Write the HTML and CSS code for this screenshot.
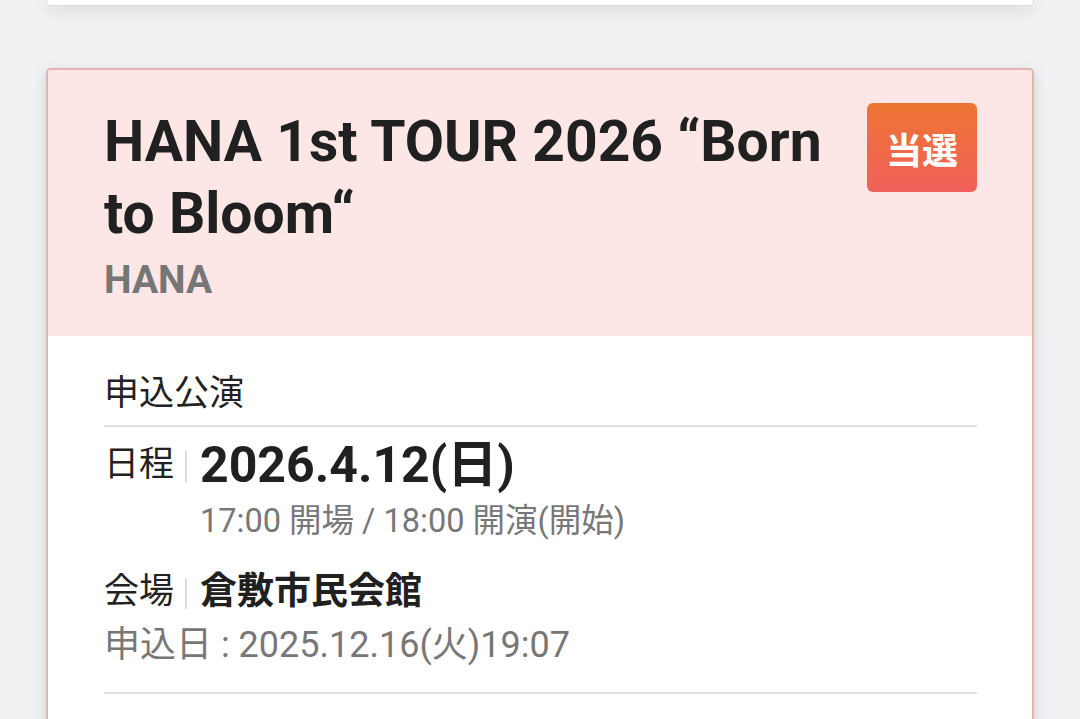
FILE: index.html
```html
<!DOCTYPE html>
<html lang="ja">
<head>
<meta charset="utf-8">
<link rel="stylesheet" href="styles.css">
</head>
<body>
<div class="page">
  <div class="card card-prev"></div>
  <div class="card card-entry">
    <div class="entry-head">
      <div class="entry-titles">
        <h1 class="entry-title">HANA 1st TOUR 2026 “Born to Bloom“</h1>
        <div class="entry-artist">HANA</div>
      </div>
      <div class="badge">当選</div>
    </div>
    <div class="entry-body">
      <div class="section-label">申込公演</div>
      <div class="row row-date">
        <div class="row-label">日程</div>
        <div class="sep"></div>
        <div class="row-content">
          <div class="date">2026.4.12(日)</div>
          <div class="times">17:00 開場 / 18:00 開演(開始)</div>
        </div>
      </div>
      <div class="row row-venue">
        <div class="row-label">会場</div>
        <div class="sep"></div>
        <div class="row-content">
          <div class="venue">倉敷市民会館</div>
        </div>
      </div>
      <div class="applied">申込日 : 2025.12.16(火)19:07</div>
      <div class="divider"></div>
    </div>
  </div>
</div>
</body>
</html>
```

FILE: styles.css
```css
* { box-sizing: border-box; margin: 0; padding: 0; }
html, body { width: 1080px; height: 719px; overflow: hidden; }
body {
  background: #f0f1f3;
  font-family: Roboto, "Noto Sans CJK JP", sans-serif;
  color: #222;
}
.page {
  padding: 0 46px;
}
.card {
  background: #fff;
  border-radius: 4px;
  box-shadow: 0 4px 14px rgba(0,0,0,0.13);
}
.card-prev {
  height: 6px;
  border-radius: 0 0 4px 4px;
  border: 1px solid #d8d8d8;
  border-top: none;
}
.card-entry {
  margin-top: 62px;
  border: 2px solid #e2b3b1;
  border-radius: 5px;
  overflow: hidden;
  height: 700px;
}
.entry-head {
  background: #fce6e6;
  display: flex;
  align-items: flex-start;
  padding: 33px 55px 31px 56px;
  gap: 30px;
}
.entry-titles { flex: 1; padding-top: 3px; }
.entry-title {
  font-size: 57px;
  line-height: 72px;
  font-weight: 700;
  color: #202020;
}
.entry-artist {
  margin-top: 5px;
  font-size: 39px;
  line-height: 50px;
  font-weight: 700;
  color: #767676;
}
.badge {
  width: 110px;
  height: 89px;
  border-radius: 6px;
  background: linear-gradient(#ee7531, #f0605b);
  color: #fff;
  font-size: 36px;
  font-weight: 700;
  display: flex;
  align-items: center;
  justify-content: center;
  font-family: "Noto Sans CJK JP", sans-serif;
}
.entry-body {
  padding: 34px 55px 0 56px;
}
.section-label {
  font-size: 35px;
  line-height: 48px;
  padding-bottom: 7px;
  border-bottom: 2px solid #dedede;
}
.row {
  display: flex;
  align-items: flex-start;
}
.row-date { margin-top: 14px; }
.row-venue { margin-top: 24px; }
.row-label {
  font-size: 35px;
  line-height: 48px;
  width: 70px;
}
.sep {
  width: 2px;
  height: 31px;
  background: #dcdcdc;
  margin: 10px 13px 0 11px;
}
.date {
  font-size: 50px;
  line-height: 54px;
  font-weight: 700;
  color: #202020;
  margin-top: -3px;
}
.times {
  margin-top: 6px;
  font-size: 32.5px;
  line-height: 46px;
  color: #777;
}
.venue {
  font-size: 37px;
  line-height: 48px;
  font-weight: 700;
  color: #202020;
}
.applied {
  margin-top: 4px;
  font-size: 36px;
  line-height: 50px;
  color: #777;
}
.divider {
  margin-top: 22px;
  height: 2px;
  background: #dedede;
}
```
